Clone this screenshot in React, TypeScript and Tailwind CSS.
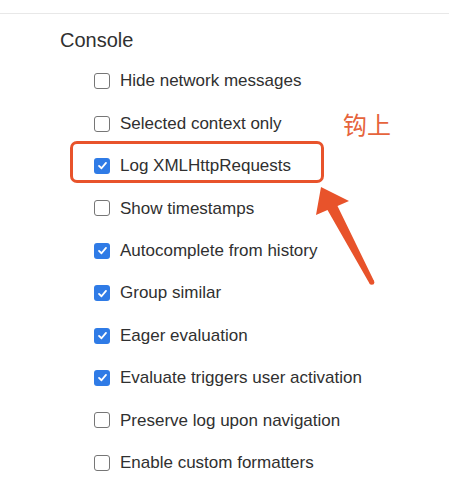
import React from "react";

const items: { label: string; checked: boolean }[] = [
  { label: "Hide network messages", checked: false },
  { label: "Selected context only", checked: false },
  { label: "Log XMLHttpRequests", checked: true },
  { label: "Show timestamps", checked: false },
  { label: "Autocomplete from history", checked: true },
  { label: "Group similar", checked: true },
  { label: "Eager evaluation", checked: true },
  { label: "Evaluate triggers user activation", checked: true },
  { label: "Preserve log upon navigation", checked: false },
  { label: "Enable custom formatters", checked: false },
];

function Box({ checked }: { checked: boolean }) {
  if (checked) {
    return (
      <span className="w-[16px] h-[16px] rounded-[3px] bg-[#2f7be6] flex items-center justify-center shrink-0">
        <svg width="11" height="11" viewBox="0 0 12 12" fill="none">
          <path d="M2.2 6.4 L4.9 9 L9.8 3.2" stroke="white" strokeWidth="2" strokeLinecap="round" strokeLinejoin="round" />
        </svg>
      </span>
    );
  }
  return <span className="w-[16px] h-[16px] rounded-[3px] border-[1.5px] border-[#767676] bg-white shrink-0" />;
}

export default function App() {
  return (
    <div className="relative w-[449px] h-[500px] bg-white overflow-hidden font-['Liberation_Sans',Arial,sans-serif] text-[#303030]">
      <div className="h-[14px] border-b border-[#e8e8e8]" />
      <div className="pl-[60px] pt-[14px] text-[20px] leading-[24px]">Console</div>
      <div className="flex flex-col pl-[94px] pt-[8px]">
        {items.map((it) => (
          <div key={it.label} className="h-[42.4px] flex items-center gap-[10px] text-[17px]">
            <Box checked={it.checked} />
            <span>{it.label}</span>
          </div>
        ))}
      </div>

      {/* annotation */}
      <div className="absolute left-[70px] top-[141px] w-[254px] h-[42px] border-[3px] border-[#e8532b] rounded-[7px]" />
      <div className="absolute left-[343px] top-[109px] text-[24px] leading-[30px] text-[#e6643c] font-['Noto_Sans_CJK_SC',sans-serif]">
        钩上
      </div>
      <svg className="absolute left-0 top-0" width="449" height="500" viewBox="0 0 449 500">
        <polygon
          points="321,187 349,201 337.5,206 374,281 369.5,283.5 327.5,210 316,215"
          fill="#e8532b"
        />
        <circle cx="371.8" cy="282.3" r="2.5" fill="#e8532b" />
      </svg>
    </div>
  );
}
